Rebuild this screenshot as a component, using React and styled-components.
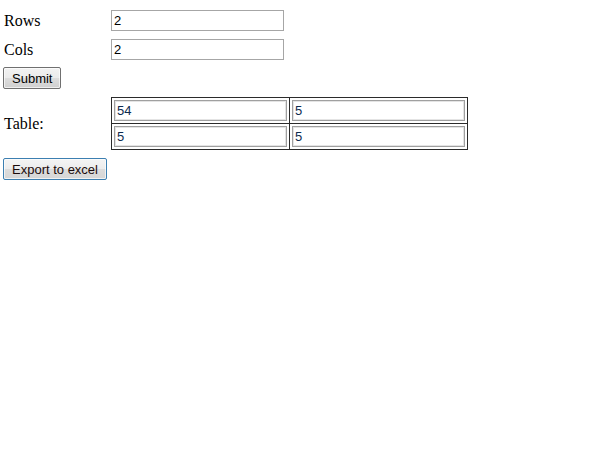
import React, { useState } from "react";
import styled, { createGlobalStyle, css } from "styled-components";

const Global = createGlobalStyle`
  html, body { margin: 0; padding: 0; background: #fff; }
  body { font-family: "Liberation Serif", "Times New Roman", serif; font-size: 16px; color: #000; }
`;

const Page = styled.form`
  display: grid;
  grid-template-columns: 108px auto;
  justify-content: start;
  align-items: center;
  row-gap: 8px;
  padding: 10px 0 0 3px;
`;

const Label = styled.label`
  padding-left: 1px;
  font-family: "Liberation Serif", "Times New Roman", serif;
  font-size: 16px;
  line-height: 18px;
  color: #000;
`;

const TextInput = styled.input`
  box-sizing: border-box;
  width: ${(p) => p.$w || 173}px;
  height: 21px;
  margin: 0;
  padding: 0 2px;
  border: 1px solid #a6a6a6;
  font-family: "Liberation Sans", Arial, sans-serif;
  font-size: 13px;
  color: ${(p) => p.$ink || "#000"};
  background: #fff;
  outline: none;
  ${(p) =>
    p.$cell &&
    css`
      border-color: #a0a0a0;
      box-shadow: inset 0 0 0 1px #e4e4e4;
    `}
`;

const Button = styled.button`
  grid-column: 1 / -1;
  justify-self: start;
  box-sizing: border-box;
  height: 22px;
  margin: ${(p) => (p.$tight ? "-1px 0 0" : "0")};
  padding: 0 8px;
  font-family: "Liberation Sans", Arial, sans-serif;
  font-size: 13px;
  color: ${(p) => (p.$primary ? "#1a0a0a" : "#000")};
  border: 1px solid ${(p) => (p.$primary ? "#3c7fb1" : "#707070")};
  border-radius: 2px;
  background: ${(p) =>
    p.$primary
      ? "linear-gradient(#f4f4f4 0%, #ececec 50%, #dcdcdc 51%, #d6d6d6 100%)"
      : "linear-gradient(#f2f2f2 0%, #ebebeb 50%, #dddddd 51%, #cfcfcf 100%)"};
  box-shadow: inset 0 0 0 1px rgba(255, 255, 255, 0.65);
  cursor: pointer;
`;

const DataTable = styled.table`
  border-collapse: collapse;
  border: 1px solid #2b2b2b;
`;

const Cell = styled.td`
  border: 1px solid #2b2b2b;
  padding: 2px;
  line-height: 0;
`;

export default function App() {
  const [rows, setRows] = useState("2");
  const [cols, setCols] = useState("2");
  const [data, setData] = useState([
    ["54", "5"],
    ["5", "5"],
  ]);

  const setCell = (r, c, v) =>
    setData((d) => d.map((row, ri) => row.map((x, ci) => (ri === r && ci === c ? v : x))));

  return (
    <>
      <Global />
      <Page onSubmit={(e) => e.preventDefault()}>
        <Label>Rows</Label>
        <TextInput value={rows} onChange={(e) => setRows(e.target.value)} />
        <Label>Cols</Label>
        <TextInput value={cols} onChange={(e) => setCols(e.target.value)} />
        <Button type="submit" $tight>
          Submit
        </Button>
        <Label>Table:</Label>
        <DataTable>
          <tbody>
            {data.map((row, r) => (
              <tr key={r}>
                {row.map((v, c) => (
                  <Cell key={c}>
                    <TextInput
                      $cell
                      $ink="#0d2b4f"
                      value={v}
                      onChange={(e) => setCell(r, c, e.target.value)}
                    />
                  </Cell>
                ))}
              </tr>
            ))}
          </tbody>
        </DataTable>
        <Button type="button" $primary>
          Export to excel
        </Button>
      </Page>
    </>
  );
}
